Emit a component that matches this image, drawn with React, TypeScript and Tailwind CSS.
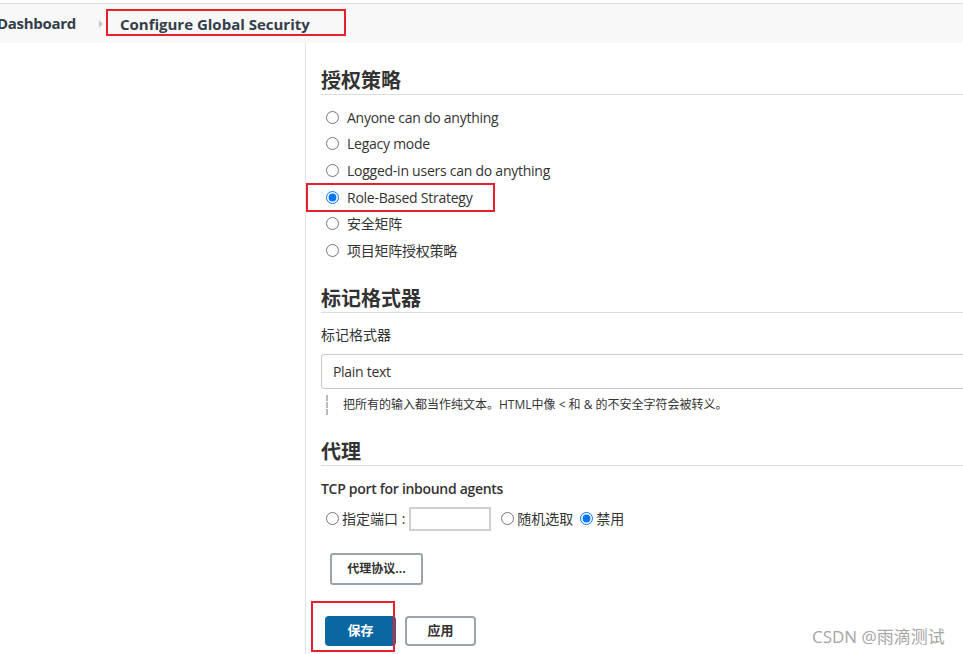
import React from "react";

const font = { fontFamily: '"Open Sans", "Noto Sans CJK SC", sans-serif' };

const strategies = [
  "Anyone can do anything",
  "Legacy mode",
  "Logged-in users can do anything",
  "Role-Based Strategy",
  "安全矩阵",
  "项目矩阵授权策略",
];

function SectionTitle({ children, mt }: { children: React.ReactNode; mt: string }) {
  return (
    <h2
      className={`${mt} h-[29px] border-b border-[#dcdcdc] text-[20px] leading-[30px] font-bold text-[#333]`}
    >
      {children}
    </h2>
  );
}

export default function App() {
  return (
    <div className="relative w-[963px] h-[654px] overflow-hidden bg-white text-[#333]" style={font}>
      {/* 面包屑 */}
      <div className="mt-[3px] h-[40px] border-t border-[#dcdcdc] bg-[#f8f8f8] flex items-center">
        <span className="ml-[-3px] text-[15px] font-bold tracking-[-0.3px] text-[#333e48]">Dashboard</span>
        <span className="ml-[23px] w-0 h-0 border-y-[4px] border-y-transparent border-l-[4px] border-l-[#c8c8c8]" />
        <span className="ml-[3px] mt-[-3px] h-[27px] w-[240px] border-2 border-[#e8202e] pl-[12px] text-[15px] leading-[26px] font-bold text-[#333e48]">
          Configure Global Security
        </span>
      </div>

      <div className="flex h-[611px]">
        <div className="w-[306px] shrink-0 border-r border-[#e4e4e4]" />

        <div className="flex-1 pl-[15px]">
          {/* 授权策略 */}
          <SectionTitle mt="mt-[23px]">授权策略</SectionTitle>
          <div className="mt-[9px]">
            {strategies.map((s) => (
              <label key={s} className="relative flex items-center h-[26.6px] text-[14px] tracking-[-0.25px]">
                <input
                  type="radio"
                  name="strategy"
                  defaultChecked={s === "Role-Based Strategy"}
                  className="m-0 ml-[5px] w-[13px] h-[13px]"
                />
                <span className="ml-[8px]">{s}</span>
                {s === "Role-Based Strategy" && (
                  <span className="absolute left-[-15px] top-[-1px] w-[189px] h-[29px] border-2 border-[#e8202e]" />
                )}
              </label>
            ))}
          </div>

          {/* 标记格式器 */}
          <SectionTitle mt="mt-[20px]">标记格式器</SectionTitle>
          <div className="mt-[12px] text-[14px] leading-[20px]">标记格式器</div>
          <div className="mt-[9px] h-[35px] mr-[-8px] border border-[#c8c8c8] rounded-[3px] flex items-center pl-[11px] text-[14px] tracking-[-0.3px]">
            Plain text
          </div>
          <div className="mt-[6px] ml-[5px] h-[20px] border-l-2 border-dashed border-[#bbb] pl-[15px] text-[12px] leading-[20px]">
            把所有的输入都当作纯文本。HTML中像 &lt; 和 &amp; 的不安全字符会被转义。
          </div>

          {/* 代理 */}
          <SectionTitle mt="mt-[22px]">代理</SectionTitle>
          <div className="mt-[13px] text-[14px] leading-[20px] font-semibold tracking-[-0.3px]">
            TCP port for inbound agents
          </div>
          <div className="mt-[8px] h-[24px] flex items-center text-[14px]">
            <input type="radio" name="port" className="m-0 ml-[5px] w-[13px] h-[13px]" />
            <span className="ml-[3px]">指定端口 :</span>
            <input
              type="text"
              className="ml-[4px] w-[82px] h-[24px] border-2 border-[#d0d0d0] bg-white outline-none"
            />
            <input type="radio" name="port" className="m-0 ml-[10px] w-[13px] h-[13px]" />
            <span className="ml-[3px]">随机选取</span>
            <input type="radio" name="port" defaultChecked className="m-0 ml-[7px] w-[13px] h-[13px]" />
            <span className="ml-[3px]">禁用</span>
          </div>
          <button className="mt-[22px] ml-[9px] h-[32px] w-[93px] rounded-[3px] border-2 border-[#9aa4ad] bg-white text-[12px] font-bold text-[#333]">
            代理协议...
          </button>

          {/* 保存 / 应用 */}
          <div className="relative mt-[31px] ml-[4px] flex gap-[9px]">
            <button className="h-[30px] w-[71px] rounded-[4px] bg-[#0b67a1] text-[13px] font-bold text-white">
              保存
            </button>
            <button className="h-[30px] w-[71px] rounded-[4px] border-2 border-[#9aa4ad] bg-white text-[13px] font-bold text-[#333]">
              应用
            </button>
            <span className="absolute left-[-14px] top-[-15px] w-[84px] h-[51px] border-2 border-[#e8202e]" />
          </div>
        </div>
      </div>

      <span className="absolute left-[812px] top-[624px] text-[17px] text-[#a6a6a6]">CSDN @雨滴测试</span>
    </div>
  );
}
